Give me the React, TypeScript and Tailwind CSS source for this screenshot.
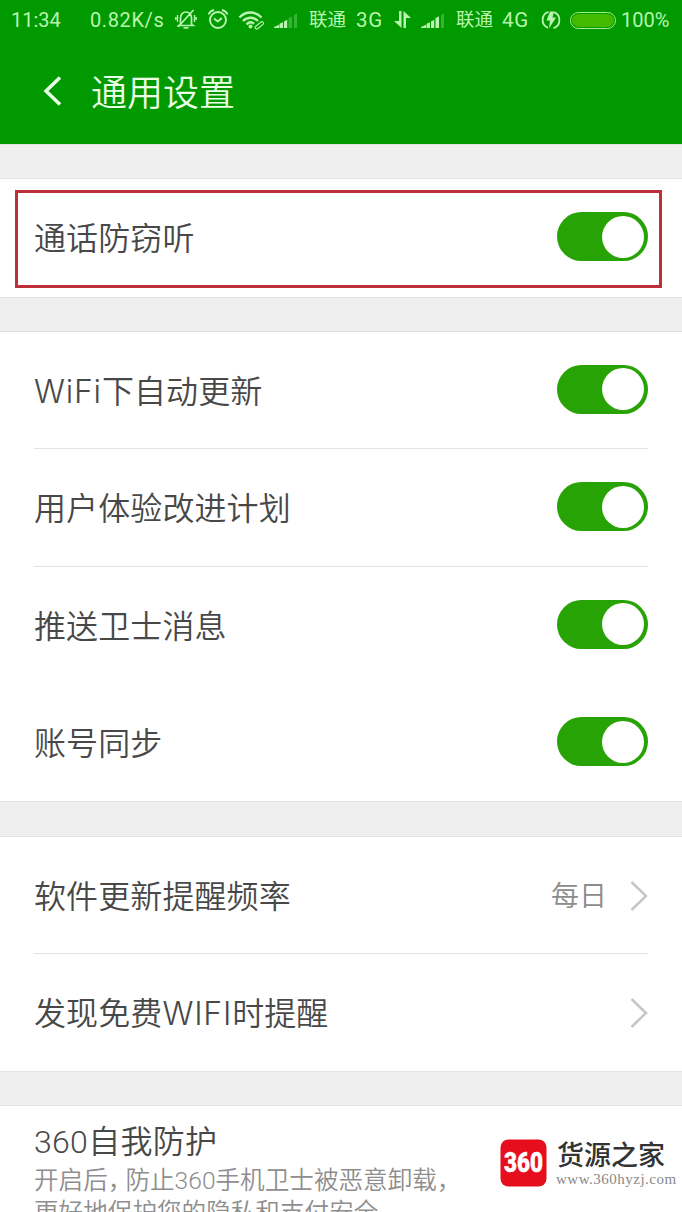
import { useState } from 'react';
import type { ReactNode } from 'react';

const Bell = () => (
  <svg className="ml-[11px] h-[22px] w-[22px] shrink-0" viewBox="0 0 22 22" fill="none" stroke="currentColor" strokeWidth="1.7">
    <path d="M5.5 15.500V9C5.500 5.500 8 3 11 3s5.500 2.500 5.500 6v6.500l1.500 1H4zM18.500 1 3 18" />
    <path d="M2.500 6v7M.8 8v3M19.500 6v7M21.200 8v3" strokeWidth="1.4" />
    <path d="M8.500 18.800h5" />
  </svg>
);

const Alarm = () => (
  <svg className="ml-[10px] h-[22px] w-[22px] shrink-0" viewBox="0 0 22 22" fill="none" stroke="currentColor" strokeWidth="1.9">
    <circle cx="11" cy="11" r="8" />
    <path d="m7 9.500 3.800 3 4-3.500M1.500 5.500C2.500 3 4.500 1.500 7 1M15 1c2.500.5 4.500 2 5.500 4.500" />
  </svg>
);

const Wifi = () => (
  <svg className="ml-[9px] mb-px h-[20px] w-[27px] shrink-0" viewBox="0 0 27 20" fill="none" stroke="currentColor" strokeWidth="2.400">
    <path d="M1.500 7.500C7.500.9 17.500.9 23.500 7.500M5 11c4.300-4.300 10.700-4.300 15 0M8.500 14.300c2.400-2.300 5.400-2.300 7.500-.6" />
    <circle cx="12.500" cy="16.500" r="2" fill="currentColor" stroke="none" />
    <path d="m17.500 16.500 5.500-4.500c1.500-1 3.500 1 2 2.300L20 18.500c-1.500 1.200-4-.5-2.500-2Z" strokeWidth="1.100" />
  </svg>
);

const Signal = ({ className, level }: { className: string; level: number }) => (
  <svg className={`h-[15px] w-[24px] shrink-0 ${className}`} viewBox="0 0 24 16" preserveAspectRatio="none" fill="currentColor">
    {['M0 16v-1l5-2.500V16z', 'M5.500 16v-4.500l3.500-1.700V16z', 'M10 16V9l3.200-1.700V16z', 'M14.500 16V5.500l3.500-2V16z', 'M20 16V2.500l3-2V16z'].map((d, i) => (
      <path key={d} d={d} opacity={i < level ? 1 : 0.3} />
    ))}
  </svg>
);

const DataArrows = () => (
  <svg className="ml-[10px] mb-0.5 h-[17px] w-[17px] shrink-0" viewBox="0 0 17 17" fill="currentColor">
    <path d="M5 0h2.500v17L0 10h5zM9.500 17H12V7h5L9.500 0z" />
  </svg>
);

const Charge = () => (
  <svg className="ml-[11px] h-[20px] w-[20px] shrink-0" viewBox="0 0 20 20" fill="none" stroke="currentColor" strokeWidth="1.800">
    <path d="M7.500 1.800a8.500 8.500 0 0 0-.5 16M12.500 18.200a8.500 8.500 0 0 0 .5-16" />
    <path d="M9 1.500h4l-1.500 6H15L8 18.500l1-8H5.500z" fill="currentColor" stroke="none" />
  </svg>
);

const StatusBar = () => (
  <div className="flex h-10 items-center overflow-hidden whitespace-nowrap pl-[11px] text-[20px] font-normal text-[#b9f5b0]">
    <span className="w-[79px] shrink-0">11:34</span>
    <span className="w-[74px] shrink-0 tracking-[0.6px]">0.82K/s</span>
    <Bell />
    <Alarm />
    <Wifi />
    <Signal className="ml-[9px]" level={3} />
    <span className="ml-[11px] w-[37px] shrink-0 pt-0.5 text-[18.500px]">联通</span>
    <span className="ml-[10px] w-[28px] shrink-0 text-[20.500px] tracking-[0.8px]">3G</span>
    <DataArrows />
    <Signal className="ml-[10px]" level={4} />
    <span className="ml-[11px] w-[37px] shrink-0 pt-0.5 text-[18.500px]">联通</span>
    <span className="ml-[9px] w-[28px] shrink-0 text-[20.500px] tracking-[0.8px]">4G</span>
    <Charge />
    <div className="ml-[9px] h-[17px] w-[46px] shrink-0 rounded-full border-[1.500px] border-[#a8ef90] p-px">
      <div className="h-full rounded-full bg-[#43b900]" />
    </div>
    <span className="ml-[5px]">100%</span>
  </div>
);

const Toggle = ({ label }: { label: string }) => {
  const [on, setOn] = useState(true);

  return (
    <button
      role="switch"
      aria-label={label}
      aria-checked={on}
      onClick={() => setOn(!on)}
      className={`mb-px flex h-[49px] w-[91px] items-center rounded-full px-1 ${on ? 'justify-end bg-[#28a305]' : 'justify-start bg-gray-300'}`}
    >
      <span className="h-[42px] w-[42px] rounded-full bg-white" />
    </button>
  );
};

const Chevron = () => (
  <svg className="ml-6 h-[32px] w-[18px] translate-y-px" viewBox="0 0 18 32" fill="none" stroke="#c6c6c6" strokeWidth="2.500">
    <path d="m1.500 2 14.500 14L1.500 30" />
  </svg>
);

// Latin words are set a little wider than the Chinese around them
const Label = ({ text }: { text: string }) => (
  <span className="flex-1 pt-1 text-[32px] tracking-[0.1px] whitespace-nowrap">
    {text.split(/([A-Za-z]+)/).map((part, i) => (
      <span key={i} className={i % 2 ? "font-['Inter'] font-[350] tracking-[0.8px]" : ''}>{part}</span>
    ))}
  </span>
);

const Row = ({ label, divider, children }: { label: string; divider?: boolean; children: ReactNode }) => (
  <div className={`mx-[34px] flex h-[117.400px] items-center border-b ${divider ? 'border-[#e2e2e2]' : 'border-transparent'}`}>
    <Label text={label} />
    {children}
  </div>
);

const Gap = () => <div className="h-[35.200px] border-y border-[#e2e2e2] bg-[#efefef]" />;

const Watermark = () => (
  <div className="absolute left-[500px] top-[1139px] flex items-center gap-[9px]">
    <svg className="h-[48px] w-[47px]" viewBox="0 0 47 48">
      <rect x="0.500" y="0.500" width="46" height="47" rx="8" fill="#e60d1d" />
      <text x="4" y="33" textLength="39" lengthAdjust="spacingAndGlyphs" fontFamily="Roboto, sans-serif" fontWeight="900" fontSize="28" fill="#fff" stroke="#fff" strokeWidth="0.500">360</text>
    </svg>
    <div className="flex flex-col whitespace-nowrap">
      <span className="pt-0.5 pl-px text-[27px] leading-[30px] font-medium text-[#333]">货源之家</span>
      <span className="font-['Liberation_Serif',serif] text-[15px] leading-4 font-normal tracking-[0.500px] text-[#888]">www.360hyzj.com</span>
    </div>
  </div>
);

export default function App() {
  return (
    <div className="relative h-[1212px] w-[682px] overflow-hidden bg-white font-['Roboto','Noto_Sans_CJK_SC',sans-serif] font-[350] text-[#484848]">
      <header className="h-36 bg-[#009900]">
        <StatusBar />
        <div className="flex h-[104px] items-center pl-[43px] text-[#eaffe5]">
          <svg className="-mt-0.5 h-[30px] w-[19px]" viewBox="0 0 19 30" fill="none" stroke="currentColor" strokeWidth="3.500">
            <path d="M17 1.500 3 15l14 13.500" />
          </svg>
          <h1 className="ml-[29px] pt-[3px] text-[36px] font-[350]">通用设置</h1>
        </div>
      </header>

      <Gap />
      <section className="relative">
        <Row label="通话防窃听">
          <Toggle label="通话防窃听" />
        </Row>
        <div className="pointer-events-none absolute top-[10.500px] left-[15px] h-[98px] w-[647px] border-3 border-[#bd3039]" />
      </section>

      <Gap />
      <section>
        <Row label="WiFi下自动更新" divider>
          <Toggle label="WiFi下自动更新" />
        </Row>
        <Row label="用户体验改进计划" divider>
          <Toggle label="用户体验改进计划" />
        </Row>
        <Row label="推送卫士消息">
          <Toggle label="推送卫士消息" />
        </Row>
        <Row label="账号同步">
          <Toggle label="账号同步" />
        </Row>
      </section>

      <Gap />
      <section>
        <Row label="软件更新提醒频率" divider>
          <span className="-mr-px pt-1 text-[28px] text-[#8b8b8b]">每日</span>
          <Chevron />
        </Row>
        <Row label="发现免费WIFI时提醒">
          <Chevron />
        </Row>
      </section>

      <Gap />
      <section className="px-[34px] pt-[17px] whitespace-nowrap">
        <h2 className="text-[32px] leading-[38px] font-[350] tracking-[0.3px]">360自我防护</h2>
        <p className="pt-[4px] text-[24.600px] leading-[32px] text-[#8e8e8e]">
          开启后<span className="tracking-[-7px]">，</span>防止360手机卫士被恶意卸载，
          <br />
          更好地保护您的隐私和支付安全
        </p>
      </section>

      <Watermark />
    </div>
  );
}
